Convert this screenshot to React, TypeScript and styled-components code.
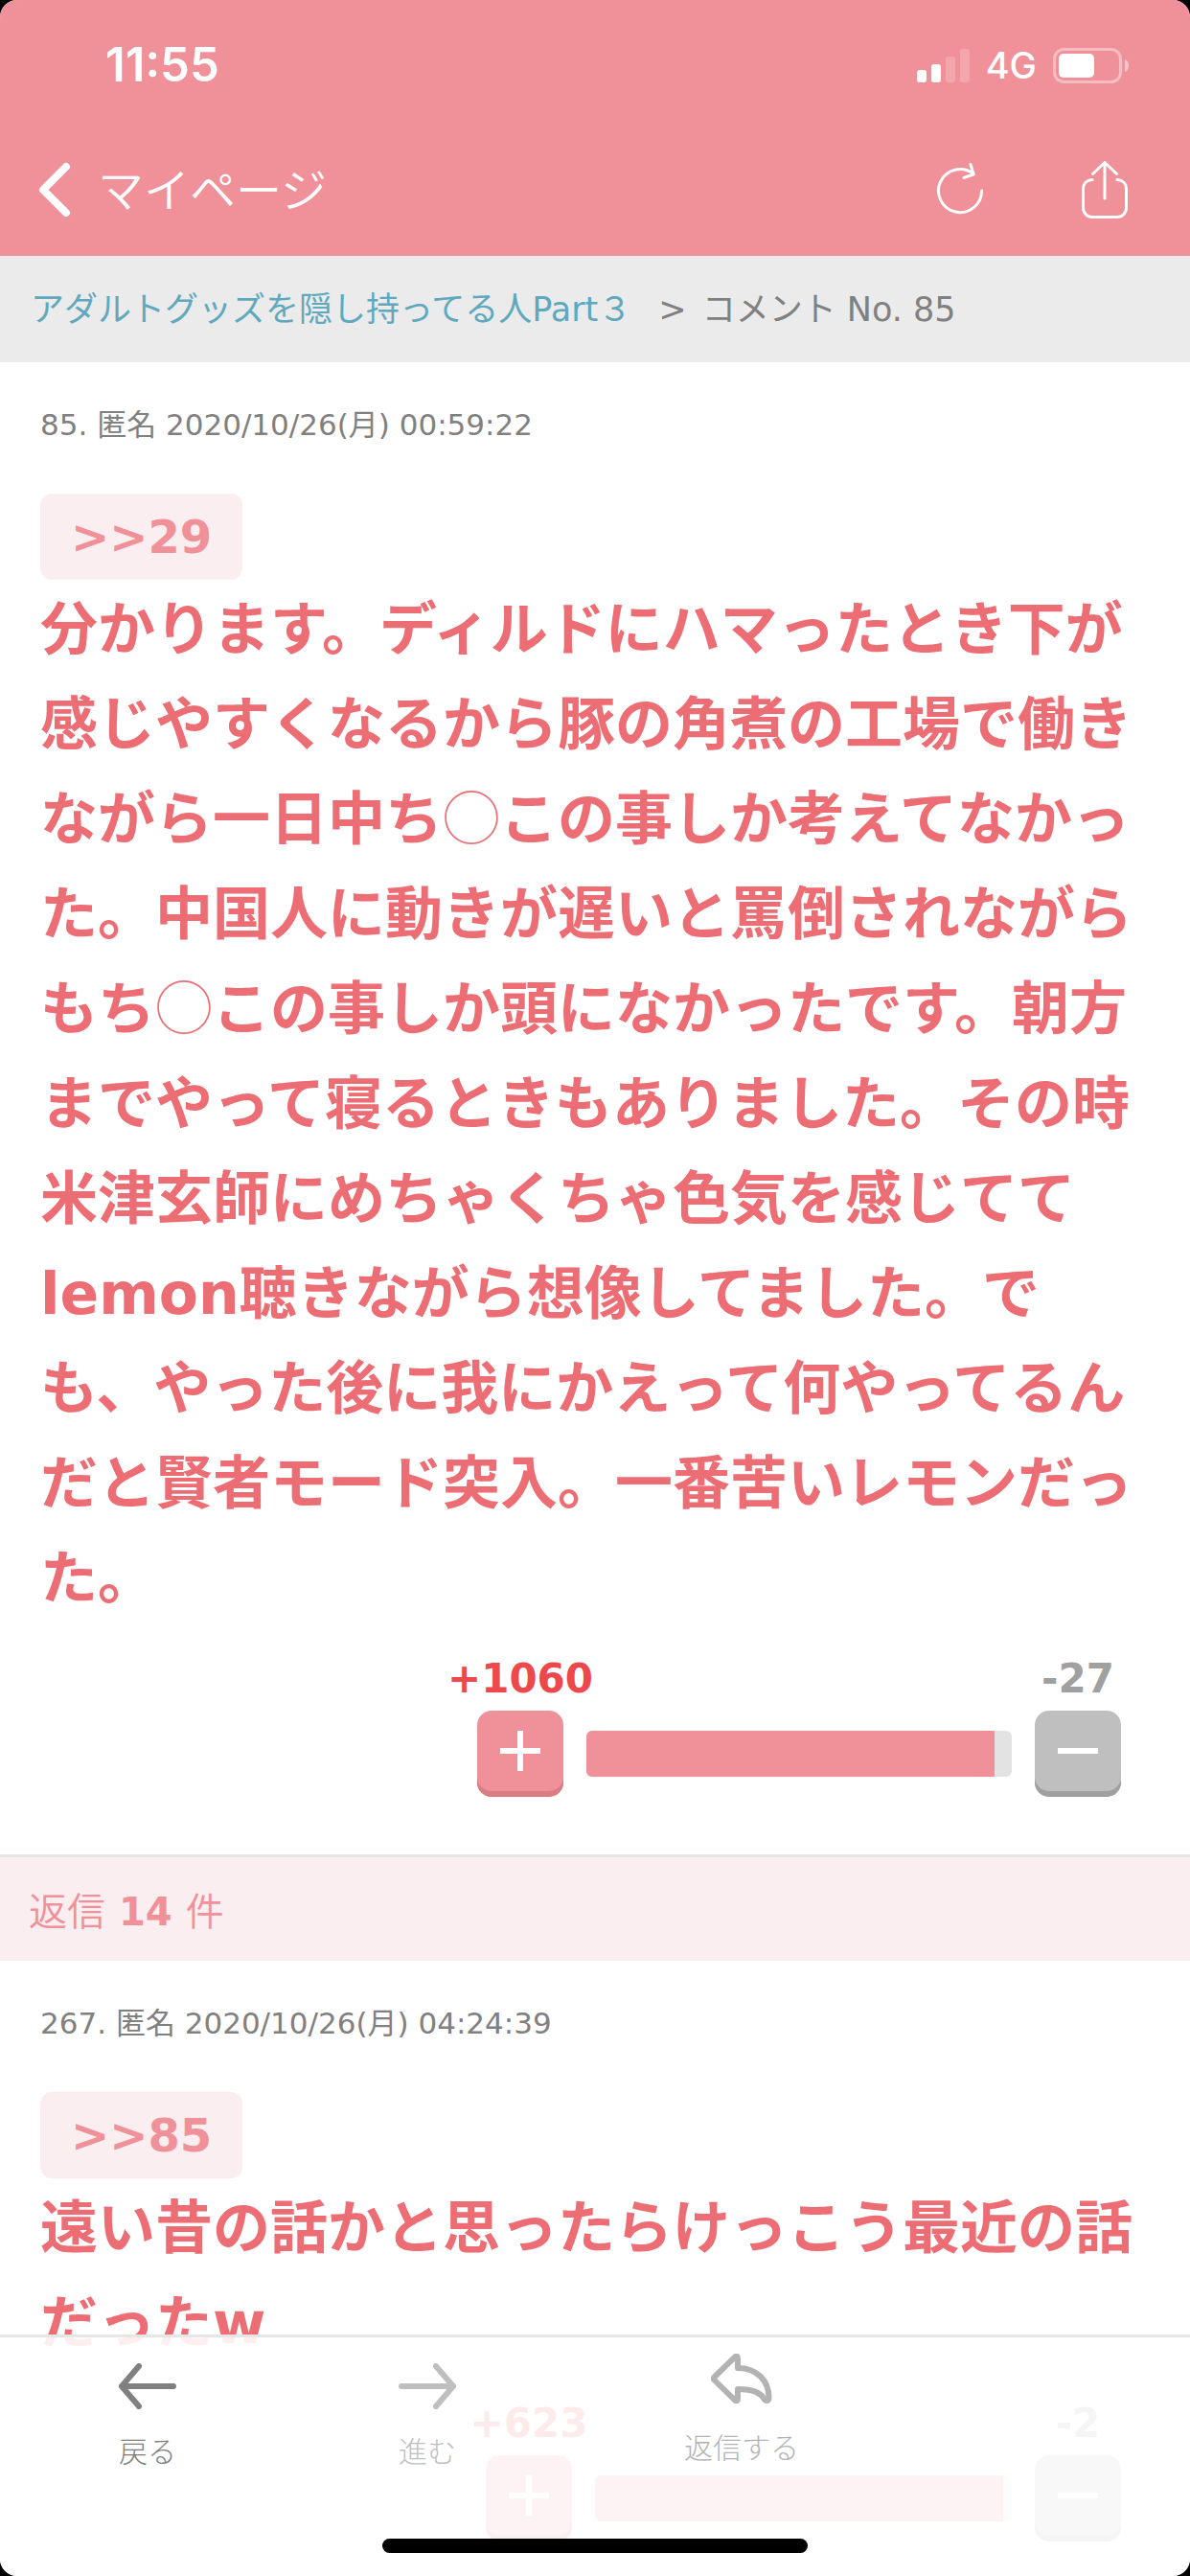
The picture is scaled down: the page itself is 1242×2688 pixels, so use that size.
import React from "react";
import styled, { createGlobalStyle } from "styled-components";

const sans = `"DejaVu Sans", "Noto Sans CJK JP", sans-serif`;
const cjk = `"Noto Sans CJK JP", sans-serif`;
const pink = "#f09199";
const palePink = "#fbeef1";

const GlobalStyle = createGlobalStyle`
  *, *::before, *::after { box-sizing: border-box; }
  body { margin: 0; background: #000; font-family: ${sans}; }
  button { border: 0; padding: 0; background: none; font: inherit; color: inherit; cursor: pointer; }
  a { text-decoration: none; }
  p, h1, h2 { margin: 0; font: inherit; }
  svg { display: block; }
`;

const Screen = styled.div`
  position: relative;
  display: flex;
  flex-direction: column;
  height: 100vh;
  overflow: hidden;
  border-radius: 18px;
  background: #fff;
`;

const Header = styled.header`
  flex: none;
  background: ${pink};
  color: #fff;
`;

const StatusBar = styled.div`
  display: flex;
  align-items: center;
  justify-content: space-between;
  height: 136px;
  padding: 0 64px 0 110px;
`;

const Clock = styled.time`
  font: 600 49px/48px Inter, sans-serif;
`;

const StatusIcons = styled.div`
  display: flex;
  align-items: center;
  gap: 17px;
`;

const Network = styled.span`
  font: 500 38px/38px Inter, sans-serif;
`;

const NavBar = styled.nav`
  display: flex;
  align-items: center;
  justify-content: space-between;
  height: 131px;
  padding: 0 65px 8px 40px;
`;

const BackButton = styled.button`
  display: flex;
  align-items: center;
  gap: 28px;
  font: 350 48px/60px ${cjk};
`;

const BackLabel = styled.span`
  padding-bottom: 6px;
`;

const NavActions = styled.div`
  display: flex;
  align-items: center;
  gap: 102px;
`;

const Scroller = styled.main`
  flex: 1;
  min-height: 0;
  overflow-y: auto;
  scrollbar-width: none;
`;

const Breadcrumb = styled.nav`
  display: flex;
  align-items: center;
  gap: 16px;
  min-height: 111px;
  padding: 0 32px;
  background: #ebebeb;
  color: #808080;
  font-size: 35px;
  line-height: 48px;
`;

const TopicLink = styled.a`
  margin-right: 12px;
  color: #5fa8bd;
`;

const Comment = styled.article`
  padding: 50px 42px 60px;
`;

const Meta = styled.p`
  color: #808080;
  font-size: 31px;
  line-height: 30px;
`;

const ReplyTo = styled.a`
  display: inline-flex;
  align-items: center;
  height: 90px;
  margin-top: 57px;
  padding: 0 32px;
  border-radius: 12px;
  background: ${palePink};
  color: ${pink};
  font-size: 48px;
  font-weight: 700;
  line-height: 60px;
  vertical-align: top;
`;

const Body = styled.p`
  margin-top: 3px;
  color: #ed6d74;
  font-size: 60px;
  font-weight: 700;
  line-height: 99px;
`;

const Circle = styled.span`
  font-family: ${cjk};
  font-weight: 300;
  line-height: 1;
`;

const Votes = styled.div`
  display: flex;
  align-items: flex-end;
  justify-content: flex-end;
  gap: 24px;
  margin-top: 34px;
  padding-right: 30px;
`;

const Vote = styled.div`
  display: flex;
  flex-direction: column;
  align-items: center;
  gap: 12px;
  width: 90px;
`;

const Count = styled.span<{ $color: string }>`
  color: ${(p) => p.$color};
  font-size: 42px;
  font-weight: 700;
  line-height: 42px;
  white-space: nowrap;
`;

const VoteButton = styled.button<{ $face: string; $edge: string }>`
  display: flex;
  justify-content: center;
  width: 90px;
  height: 90px;
  padding-top: 21px;
  border-radius: 15px;
  background: ${(p) => p.$face};
  box-shadow: inset 0 -6px 0 ${(p) => p.$edge};
`;

const Meter = styled.div<{ $width: number }>`
  width: ${(p) => p.$width}px;
  height: 48px;
  margin-bottom: 21px;
  border-radius: 6px;
  overflow: hidden;
  background: #e3e3e3;
`;

const MeterFill = styled.div`
  height: 100%;
  background: ${pink};
`;

const RepliesHeading = styled.h2`
  display: flex;
  align-items: baseline;
  gap: 14px;
  min-height: 111px;
  padding: 28px 30px 0;
  border-top: 3px solid #e5e5e5;
  background: ${palePink};
  color: ${pink};
  font: 350 40px/52px ${cjk};

  b {
    font: 700 40px/52px ${sans};
  }
`;

const BottomBar = styled.nav`
  position: absolute;
  right: 0;
  bottom: 0;
  left: 0;
  display: grid;
  grid-template-columns: 308fr 276fr 380fr 278fr;
  justify-items: center;
  align-items: start;
  height: 252px;
  border-top: 3px solid #e6e6e6;
  background: rgba(255, 255, 255, 0.89);
`;

const Tab = styled.button<{ $color: string; $top: number; $gap: number }>`
  display: flex;
  flex-direction: column;
  align-items: center;
  gap: ${(p) => p.$gap}px;
  padding-top: ${(p) => p.$top}px;
  color: ${(p) => p.$color};
  font: 300 30px/40px ${cjk};
`;

const HomeIndicator = styled.div`
  position: absolute;
  bottom: 24px;
  left: 50%;
  width: 444px;
  height: 15px;
  margin-left: -222px;
  border-radius: 8px;
  background: #000;
`;

const SignalIcon = () => (
  <svg width="55" height="35" fill="#fff" aria-hidden="true">
    <rect x="0" y="22" width="10" height="13" rx="3" />
    <rect x="15" y="16" width="10" height="19" rx="3" />
    <rect x="30" y="8" width="10" height="27" rx="3" opacity="0.2" />
    <rect x="45" y="0" width="10" height="35" rx="3" opacity="0.2" />
  </svg>
);

const BatteryIcon = () => (
  <svg width="79" height="37" fill="none" aria-hidden="true">
    <rect x="1.5" y="1.5" width="69" height="34" rx="10" stroke="#fff" strokeOpacity="0.4" strokeWidth="3" />
    <rect x="6" y="6" width="37" height="25" rx="5" fill="#fff" />
    <path d="M75 12c3 1 4 4 4 6.500s-1 5.500-4 6.500z" fill="#fff" fillOpacity="0.45" />
  </svg>
);

const ChevronIcon = () => (
  <svg width="34" height="58" fill="none" stroke="#fff" strokeWidth="8" strokeLinecap="round" strokeLinejoin="round" aria-hidden="true">
    <path d="M29 5 5 29l24 24" />
  </svg>
);

const ReloadIcon = () => (
  <svg width="50" height="60" fill="none" stroke="#fff" strokeWidth="3" strokeLinecap="round" strokeLinejoin="round" aria-hidden="true">
    <path d="M47.500 31A22.500 22.500 0 1 1 39 13.500" />
    <path d="M36 3.500 39 14l-10 3.500" />
  </svg>
);

const ShareIcon = () => (
  <svg width="48" height="60" fill="none" stroke="#fff" strokeWidth="3" strokeLinecap="round" strokeLinejoin="round" aria-hidden="true">
    <path d="M11 19.500C5 20 1.500 24 1.500 29v20A9.500 9.500 0 0 0 11 58.500h26a9.500 9.500 0 0 0 9.500-9.500V29c0-5-3.500-9-9.500-9.500" />
    <path d="M24 39V1.500M11.500 13.500 24 1.500l12.500 12" />
  </svg>
);

const ArrowIcon = ({ forward }: { forward?: boolean }) => (
  <svg width="60" height="48" fill="none" stroke="currentColor" strokeWidth="6" strokeLinecap="round" strokeLinejoin="round" aria-hidden="true">
    <path d={forward ? "M3 24h54M39 3l18 21-18 21" : "M57 24H3M21 3 3 24l18 21"} />
  </svg>
);

const ReplyIcon = () => (
  <svg width="64" height="52" fill="none" stroke="currentColor" strokeWidth="6" strokeLinecap="round" strokeLinejoin="round" aria-hidden="true">
    <path d="M25.500 3 3.500 24.500q-1.500 1.500 0 3l22 21.500q2.500 1 2.500-2V37c17 0 24 4 28 11q4 3 4.500-2C60.500 28 48 15 28 15V5q0-3-2.500-2z" />
  </svg>
);

const PlusMinus = ({ plus }: { plus?: boolean }) => (
  <svg width="42" height="42" stroke="#fff" strokeWidth="6" aria-hidden="true">
    <path d={plus ? "M0 21h42M21 0v42" : "M0 21h42"} />
  </svg>
);

type VoteRowProps = { plus: number; minus: number; width: number; ratio: number };

const VoteRow = ({ plus, minus, width, ratio }: VoteRowProps) => (
  <Votes>
    <Vote>
      <Count $color="#ed484c">+{plus}</Count>
      <VoteButton $face={pink} $edge="#dc7b83" aria-label="プラス">
        <PlusMinus plus />
      </VoteButton>
    </Vote>
    <Meter $width={width}>
      <MeterFill style={{ width: `${ratio}%` }} />
    </Meter>
    <Vote>
      <Count $color="#a0a0a0">-{minus}</Count>
      <VoteButton $face="#bfbfbf" $edge="#a0a0a0" aria-label="マイナス">
        <PlusMinus />
      </VoteButton>
    </Vote>
  </Votes>
);

export default function App() {
  return (
    <>
      <GlobalStyle />
      <Screen lang="ja">
        <Header>
          <StatusBar>
            <Clock>11:55</Clock>
            <StatusIcons>
              <SignalIcon />
              <Network>4G</Network>
              <BatteryIcon />
            </StatusIcons>
          </StatusBar>
          <NavBar>
            <BackButton>
              <ChevronIcon />
              <BackLabel>マイページ</BackLabel>
            </BackButton>
            <NavActions>
              <button aria-label="再読み込み">
                <ReloadIcon />
              </button>
              <button aria-label="共有">
                <ShareIcon />
              </button>
            </NavActions>
          </NavBar>
        </Header>

        <Scroller>
          <Breadcrumb>
            <TopicLink href="#topic">アダルトグッズを隠し持ってる人Part３</TopicLink>
            <span>&gt;</span>
            <span>コメント No. 85</span>
          </Breadcrumb>

          <Comment>
            <Meta>85. 匿名 2020/10/26(月) 00:59:22</Meta>
            <ReplyTo href="#c29">&gt;&gt;29</ReplyTo>
            <Body>
              分かります。ディルドにハマったとき下が感じやすくなるから豚の角煮の工場で働きながら一日中ち
              <Circle>◯</Circle>
              この事しか考えてなかった。中国人に動きが遅いと罵倒されながらもち
              <Circle>◯</Circle>
              この事しか頭になかったです。朝方までやって寝るときもありました。その時米津玄師にめちゃくちゃ色気を感じててlemon聴きながら想像してました。でも、やった後に我にかえって何やってるんだと賢者モード突入。一番苦いレモンだった。
            </Body>
            <VoteRow plus={1060} minus={27} width={444} ratio={96} />
          </Comment>

          <RepliesHeading>
            <span>返信</span>
            <b>14</b>
            <span>件</span>
          </RepliesHeading>

          <Comment>
            <Meta>267. 匿名 2020/10/26(月) 04:24:39</Meta>
            <ReplyTo href="#c85">&gt;&gt;85</ReplyTo>
            <Body>遠い昔の話かと思ったらけっこう最近の話だったw</Body>
            <VoteRow plus={623} minus={2} width={435} ratio={98} />
          </Comment>
        </Scroller>

        <BottomBar>
          <Tab $color="#808080" $top={27} $gap={22}>
            <ArrowIcon />
            戻る
          </Tab>
          <Tab $color="#bfbfbf" $top={27} $gap={22}>
            <ArrowIcon forward />
            進む
          </Tab>
          <Tab $color="#b3b3b3" $top={17} $gap={24}>
            <ReplyIcon />
            返信する
          </Tab>
        </BottomBar>
        <HomeIndicator />
      </Screen>
    </>
  );
}
